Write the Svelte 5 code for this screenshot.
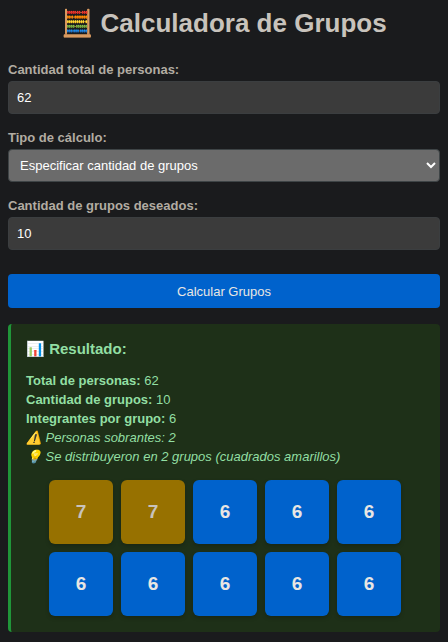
<script>
  let people = $state(62);
  let mode = $state('groups');
  let amount = $state(10);
  let result = $state(compute(62, 'groups', 10));

  function compute(total, kind, value) {
    const count = kind === 'groups' ? value : Math.max(1, Math.floor(total / value));
    const size = Math.floor(total / count);
    const extra = total - size * count;
    const sizes = Array.from({ length: count }, (_, i) => (i < extra ? size + 1 : size));
    return { total, count, size, extra, sizes };
  }

  function submit(event) {
    event.preventDefault();
    if (people > 0 && amount > 0) result = compute(people, mode, amount);
  }
</script>

<main>
  <h1>🧮 Calculadora de Grupos</h1>

  <form onsubmit={submit}>
    <div class="field">
      <label for="people">Cantidad total de personas:</label>
      <input id="people" type="number" min="1" bind:value={people} />
    </div>
    <div class="field">
      <label for="mode">Tipo de cálculo:</label>
      <select id="mode" bind:value={mode}>
        <option value="groups">Especificar cantidad de grupos</option>
        <option value="members">Especificar integrantes por grupo</option>
      </select>
    </div>
    <div class="field">
      <label for="amount">{mode === 'groups' ? 'Cantidad de grupos deseados:' : 'Integrantes por grupo:'}</label>
      <input id="amount" type="number" min="1" bind:value={amount} />
    </div>
    <button type="submit">Calcular Grupos</button>
  </form>

  <section class="result">
    <h2>📊 Resultado:</h2>
    <p><strong>Total de personas:</strong> {result.total}</p>
    <p><strong>Cantidad de grupos:</strong> {result.count}</p>
    <p><strong>Integrantes por grupo:</strong> {result.size}</p>
    {#if result.extra > 0}
      <p><em>⚠️ Personas sobrantes: {result.extra}</em></p>
      <p><em>💡 Se distribuyeron en {result.extra} grupos (cuadrados amarillos)</em></p>
    {/if}
    <div class="squares">
      {#each result.sizes as size}
        <div class="square" class:extra={size > result.size}>{size}</div>
      {/each}
    </div>
  </section>
</main>

<style>
  :global(body) {
    margin: 0;
    background: #1a1b1d;
  }

  main {
    padding: 8px;
    font-family: "Liberation Sans", Arial, sans-serif;
    font-size: 13px;
    line-height: 19px;
    color: #b2aca2;
  }

  h1 {
    margin: 0 0 22px;
    font-size: 26px;
    line-height: 30px;
    text-align: center;
    color: #c8c3bc;
  }

  .field {
    display: flex;
    flex-direction: column;
    gap: 2px;
    margin-bottom: 14px;
  }

  label {
    font-weight: bold;
  }

  input,
  select,
  button {
    box-sizing: border-box;
    width: 100%;
    height: 33px;
    border-radius: 4px;
    font: inherit;
    color: #ffffff;
  }

  input {
    padding: 0 8px;
    border: 1px solid #3b3e40;
    background: #3b3b3b;
    appearance: textfield;
  }

  input::-webkit-inner-spin-button {
    display: none;
  }

  select {
    padding: 0 7px;
    border: 1px solid #3e4446;
    background: #6b6b6b;
  }

  button {
    height: 34px;
    margin-top: 10px;
    border: 0;
    background: #0062cc;
    color: #e8e6e3;
    cursor: pointer;
  }

  .result {
    margin-top: 16px;
    padding: 15px 16px 16px 15px;
    border-left: 3px solid #209539;
    border-radius: 4px;
    background: #1e3018;
    color: #92dfa3;
  }

  h2 {
    margin: 0 0 13px;
    font-size: 15px;
    line-height: 19px;
  }

  p {
    margin: 0;
  }

  .squares {
    display: flex;
    flex-wrap: wrap;
    justify-content: center;
    gap: 8px;
    margin-top: 14px;
  }

  .square {
    display: flex;
    align-items: center;
    justify-content: center;
    width: 64px;
    height: 64px;
    border-radius: 6px;
    background: #0062cc;
    box-shadow: 0 2px 4px rgba(0, 0, 0, 0.2);
    font-size: 19px;
    line-height: 20px;
    font-weight: bold;
    color: #e8e6e3;
  }

  .square.extra {
    background: #977100;
    color: #c8c3bc;
  }
</style>
